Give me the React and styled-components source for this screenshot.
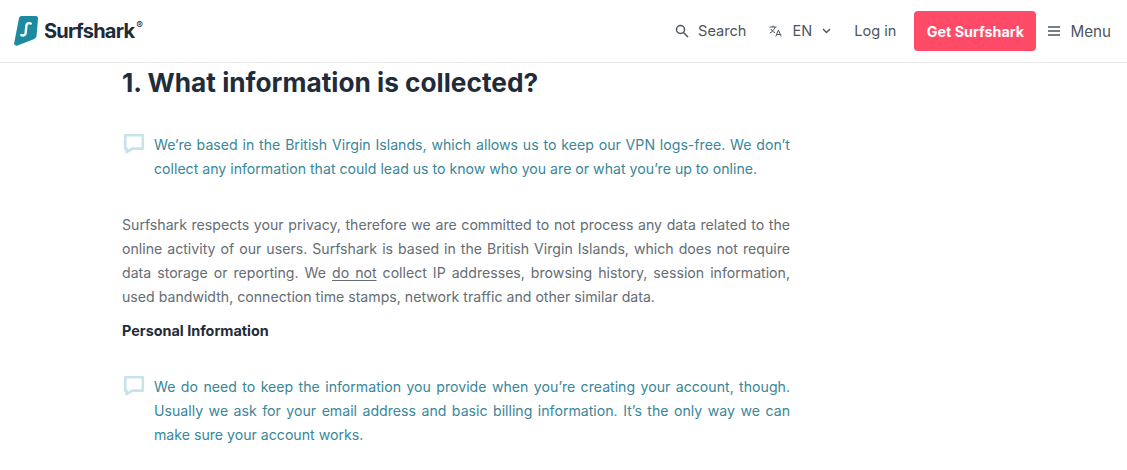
import styled, { createGlobalStyle } from "styled-components";

const GlobalStyle = createGlobalStyle`
  html, body {
    margin: 0;
    height: 470px;
    overflow: hidden;
    background: #fff;
    font-family: Inter, "Noto Sans", sans-serif;
  }
`;

const Header = styled.header`
  height: 62px;
  border-bottom: 1px solid #e8e9ea;
  display: flex;
  align-items: center;
  justify-content: space-between;
  padding: 0 16px 0 14px;
`;

const Logo = styled.div`
  display: flex;
  align-items: center;
  gap: 6px;
  margin-top: -1px;
`;

const LogoWord = styled.span`
  font-size: 20px;
  font-weight: 700;
  letter-spacing: -0.75px;
  color: #1b2b3a;
  position: relative;
  padding-right: 8px;
  sup {
    position: absolute;
    right: 0;
    top: -1px;
    font-size: 10px;
    line-height: 14px;
    font-weight: 400;
  }
`;

const Nav = styled.nav`
  display: flex;
  align-items: center;
`;

const NavItem = styled.a`
  display: flex;
  align-items: center;
  gap: ${(p) => p.$gap || 8}px;
  margin-right: ${(p) => p.$right || 0}px;
  font-size: ${(p) => p.$size || 14.6}px;
  color: #4b5661;
  svg {
    flex: none;
  }
`;

const CtaButton = styled.a`
  width: 122px;
  height: 40px;
  margin-right: 12px;
  display: flex;
  align-items: center;
  justify-content: center;
  border-radius: 4px;
  background: #ff4b68;
  color: #fff;
  font-size: 14.3px;
  font-weight: 700;
`;

const Main = styled.main`
  width: 668px;
  margin-left: 122px;
`;

const Title = styled.h1`
  margin: 0;
  padding-top: 3px;
  font-size: 26.25px;
  line-height: 34px;
  font-weight: 700;
  color: #1f2c3a;
`;

const Callout = styled.div`
  display: flex;
  gap: 9px;
  padding-left: 1px;
  margin-top: ${(p) => p.$top}px;
  svg {
    flex: none;
  }
`;

const CalloutText = styled.p`
  margin: 0;
  font-size: 14.14px;
  line-height: 24px;
  color: #3a8799;
  text-align: justify;
`;

const Body = styled.p`
  margin: 32px 0 0;
  font-size: 14.14px;
  line-height: 24px;
  color: #656d75;
  text-align: justify;
  u {
    text-underline-offset: 2px;
  }
`;

const SubHead = styled.h2`
  margin: 10px 0 0;
  font-size: 14.4px;
  line-height: 24px;
  font-weight: 700;
  color: #1f2c3a;
`;

const SearchIcon = () => (
  <svg width="14" height="14" viewBox="0 0 14 14" fill="none" stroke="#4b5661" strokeWidth="1.5">
    <circle cx="5.5" cy="5.5" r="4" />
    <path d="M8.5 8.5L13 13" />
  </svg>
);

const TranslateIcon = () => (
  <svg width="13" height="12" viewBox="0 0 13 12" fill="none" stroke="#4b5661" strokeWidth="1">
    <path d="M0.5 2h7M4 0.5V2M6 2C5.4 4.6 3.4 6.8 0.8 8M2 4c.8 1.6 2.2 3 4 3.6" />
    <path d="M6.8 11.5L9.4 5l2.8 6.5M7.8 9.5h3.4" />
  </svg>
);

const Chevron = () => (
  <svg width="9" height="6" viewBox="0 0 9 6" fill="none" stroke="#4b5661" strokeWidth="1.4">
    <path d="M1 1l3.5 3.5L8 1" />
  </svg>
);

const MenuIcon = () => (
  <svg width="12" height="10" viewBox="0 0 12 10" fill="none" stroke="#4b5661" strokeWidth="1.5">
    <path d="M0 1h12M0 5h12M0 9h12" />
  </svg>
);

const Bubble = () => (
  <svg width="22" height="22" viewBox="0 0 22 22" fill="none" stroke="#c6e3e9" strokeWidth="2.6">
    <path d="M2.2 2.2h17.6v13.4H9.2L3.6 19.2v-3.6H2.2z" strokeLinejoin="round" />
  </svg>
);

const LogoMark = () => (
  <svg width="24" height="30" viewBox="0 0 24 30">
    <path
      d="M5 2.2C5.3.9 6.3 0 7.6 0h14.2C23.2 0 24.1 1 24 2.4l-1.4 16.8c-.2 1.8-1.2 3.2-2.9 4L3.6 29.6C1.8 30.3 0 29 .2 27z"
      fill="#1c8b9f"
    />
    <path
      d="M16.8 7.6c-2.4-1-4.2-.2-4.4 2l-.7 7c-.2 2.4-1.8 3.4-4.4 2.5"
      fill="none"
      stroke="#fff"
      strokeWidth="2.4"
      strokeLinecap="round"
    />
  </svg>
);

export default function App() {
  return (
    <>
      <GlobalStyle />
      <Header>
        <Logo>
          <LogoMark />
          <LogoWord>
            Surfshark<sup>®</sup>
          </LogoWord>
        </Logo>
        <Nav>
          <NavItem $right={23} $gap={9}>
            <SearchIcon />
            Search
          </NavItem>
          <NavItem $right={23} $gap={10}>
            <TranslateIcon />
            EN
            <Chevron />
          </NavItem>
          <NavItem $right={18}>Log in</NavItem>
          <CtaButton>Get Surfshark</CtaButton>
          <NavItem $gap={10} $size={15.2}>
            <MenuIcon />
            Menu
          </NavItem>
        </Nav>
      </Header>
      <Main>
        <Title>1. What information is collected?</Title>
        <Callout $top={33}>
          <Bubble />
          <CalloutText>
            We’re based in the British Virgin Islands, which allows us to keep our VPN logs-free. We
            don’t collect any information that could lead us to know who you are or what you’re up to
            online.
          </CalloutText>
        </Callout>
        <Body>
          Surfshark respects your privacy, therefore we are committed to not process any data related
          to the online activity of our users. Surfshark is based in the British Virgin Islands, which
          does not require data storage or reporting. We <u>do not</u> collect IP addresses, browsing
          history, session information, used bandwidth, connection time stamps, network traffic and
          other similar data.
        </Body>
        <SubHead>Personal Information</SubHead>
        <Callout $top={32}>
          <Bubble />
          <CalloutText>
            We do need to keep the information you provide when you’re creating your account, though.
            Usually we ask for your email address and basic billing information. It’s the only way we
            can make sure your account works.
          </CalloutText>
        </Callout>
      </Main>
    </>
  );
}
